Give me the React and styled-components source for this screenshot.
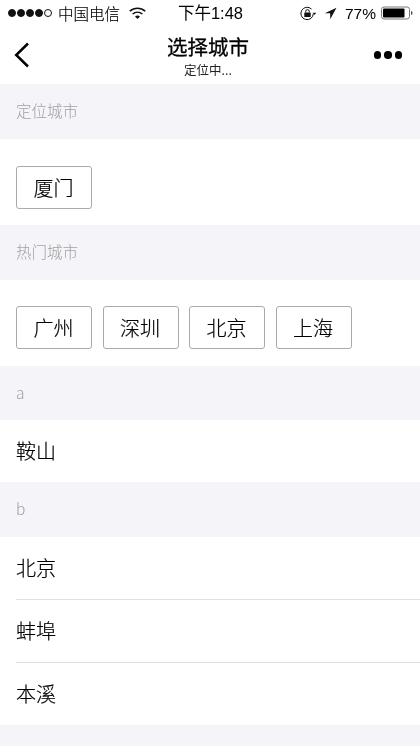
import React from 'react';
import styled, { createGlobalStyle } from 'styled-components';

const CJK = `"Noto Sans CJK SC", "Liberation Sans", sans-serif`;

const GlobalStyle = createGlobalStyle`
  html, body {
    margin: 0;
    padding: 0;
    background: #f4f4f9;
    font-family: ${CJK};
  }
`;

const Page = styled.div`
  width: 420px;
  height: 746px;
  overflow: hidden;
  background: #f4f4f9;
  will-change: transform;
`;

const Header = styled.header`
  height: 84px;
  background: #fff;
  display: flex;
  flex-direction: column;
`;

const StatusBar = styled.div`
  height: 26px;
  padding: 0 7px 0 8px;
  display: grid;
  grid-template-columns: 1fr auto 1fr;
  align-items: center;
  color: #000;
  font-size: 15.5px;
  font-weight: 300;
`;

const StatusLeft = styled.div`
  display: flex;
  align-items: center;
`;

const StatusRight = styled.div`
  display: flex;
  align-items: center;
  justify-content: flex-end;
`;

const Dot = styled.span`
  width: 8px;
  height: 8px;
  margin-right: 1px;
  border-radius: 50%;
  box-sizing: border-box;
  border: 1px solid #111;
  background: ${(p) => (p.$off ? 'transparent' : '#111')};
`;

const Carrier = styled.span`
  margin-left: 5px;
  margin-right: 9px;
  -webkit-text-stroke: 0.15px #000;
`;

const Clock = styled.span`
  font-size: 16.5px;
  font-weight: 400;
  margin-top: -2px;
  font-family: "Liberation Sans", ${CJK};
`;

const Percent = styled.span`
  font-size: 15.5px;
  font-family: "Liberation Sans", sans-serif;
  margin: 2px 5px 0 8px;
`;

const NavBar = styled.div`
  flex: 1;
  display: grid;
  grid-template-columns: 1fr auto 1fr;
  align-items: center;
  padding: 0 18px 0 14px;
`;

const TitleBlock = styled.div`
  display: flex;
  flex-direction: column;
  align-items: center;
  color: #000;
`;

const Title = styled.div`
  font-size: 20.5px;
  line-height: 28px;
  font-weight: 400;
  -webkit-text-stroke: 0.3px #000;
`;

const Subtitle = styled.div`
  font-size: 12.5px;
  line-height: 18px;
  margin-top: 1px;
  color: #222;
`;

const More = styled.div`
  display: flex;
  gap: 3px;
  justify-content: flex-end;
`;

const MoreDot = styled.span`
  width: 7.500px;
  height: 7.500px;
  border-radius: 50%;
  background: #000;
`;

const SectionHead = styled.div`
  height: ${(p) => p.$h || 55}px;
  padding: 0 16px 3px;
  display: flex;
  align-items: center;
  font-size: 15.5px;
  font-weight: 300;
  color: #a0a0a0;
  box-sizing: border-box;
`;

const ButtonPanel = styled.div`
  height: 86px;
  padding: ${(p) => p.$top}px 16px 0;
  display: flex;
  align-items: flex-start;
  gap: 10.500px;
  background: #fff;
  box-sizing: border-box;
`;

const CityButton = styled.div`
  width: 76px;
  height: 43px;
  padding: 0 1px 1px 0;
  box-sizing: border-box;
  border: 1px solid #aaa;
  border-radius: 3px;
  display: flex;
  align-items: center;
  justify-content: center;
  font-size: 20px;
  font-weight: 300;
  color: #000;
  -webkit-text-stroke: 0.2px #000;
`;

const List = styled.div`
  background: #fff;
  padding-left: 16px;
`;

const Row = styled.div`
  height: ${(p) => p.$h || 63}px;
  padding: 0 16px 2px 0;
  display: flex;
  align-items: center;
  font-size: 20px;
  font-weight: 300;
  color: #000;
  -webkit-text-stroke: 0.2px #000;
  box-sizing: border-box;
  border-bottom: ${(p) => (p.$last ? 'none' : '1px solid #e0e0e0')};
`;

const WifiIcon = () => (
  <svg width="17" height="12" viewBox="0 0 17 12">
    <path d="M.8 4.200C5.200.2 11.800.2 16.200 4.200" fill="none" stroke="#111" strokeWidth="1.600" />
    <path d="M3.600 7c2.900-2.400 6.900-2.400 9.800 0" fill="none" stroke="#111" strokeWidth="1.600" />
    <path d="M6 9.400c1.500-1.100 3.500-1.100 5 0L8.500 12z" fill="#111" />
  </svg>
);

const LockIcon = () => (
  <svg width="17" height="15" viewBox="0 0 17 15">
    <path d="M13.300 7.500a6.200 6.200 0 1 1-1.800-4.400" fill="none" stroke="#111" strokeWidth="1" />
    <path d="M12.800 6.800l3.400 0-1.700 2.300z" fill="#111" />
    <rect x="4.300" y="6.500" width="6.400" height="4.600" rx=".6" fill="#111" />
    <path d="M5.700 6.500V5.400a1.800 1.800 0 0 1 3.600 0v1.100" fill="none" stroke="#111" strokeWidth="1" />
  </svg>
);

const ArrowIcon = () => (
  <svg width="13" height="13" viewBox="0 0 13 13" style={{ marginLeft: 7 }}>
    <path d="M12.500.8L.8 6.300h5.400v5.900z" fill="#111" />
  </svg>
);

const BatteryIcon = () => (
  <svg width="32" height="14" viewBox="0 0 32 14">
    <rect x=".5" y="1" width="28" height="12" rx="2.500" fill="none" stroke="#777" strokeWidth="1" />
    <rect x="2" y="2.500" width="21.500" height="9" rx="1" fill="#000" />
    <path d="M30 5v4c1 0 1.500-.8 1.500-2S31 5 30 5z" fill="#555" />
  </svg>
);

const BackIcon = () => (
  <svg width="16" height="26" viewBox="0 0 16 26">
    <path d="M14 1.500L2.200 13 14 24.500" fill="none" stroke="#000" strokeWidth="2.500" />
  </svg>
);

const hotCities = ['广州', '深圳', '北京', '上海'];

export default function App() {
  return (
    <Page>
      <GlobalStyle />
      <Header>
        <StatusBar>
          <StatusLeft>
            <Dot /><Dot /><Dot /><Dot /><Dot $off />
            <Carrier>中国电信</Carrier>
            <WifiIcon />
          </StatusLeft>
          <Clock>下午1:48</Clock>
          <StatusRight>
            <LockIcon />
            <ArrowIcon />
            <Percent>77%</Percent>
            <BatteryIcon />
          </StatusRight>
        </StatusBar>
        <NavBar>
          <BackIcon />
          <TitleBlock>
            <Title>选择城市</Title>
            <Subtitle>定位中...</Subtitle>
          </TitleBlock>
          <More><MoreDot /><MoreDot /><MoreDot /></More>
        </NavBar>
      </Header>

      <SectionHead>定位城市</SectionHead>
      <ButtonPanel $top={27}>
        <CityButton>厦门</CityButton>
      </ButtonPanel>

      <SectionHead>热门城市</SectionHead>
      <ButtonPanel $top={26}>
        {hotCities.map((c) => <CityButton key={c}>{c}</CityButton>)}
      </ButtonPanel>

      <SectionHead $h={54}>a</SectionHead>
      <List>
        <Row $last $h={62}>鞍山</Row>
      </List>

      <SectionHead>b</SectionHead>
      <List>
        <Row>北京</Row>
        <Row>蚌埠</Row>
        <Row $last $h={62}>本溪</Row>
      </List>
    </Page>
  );
}
